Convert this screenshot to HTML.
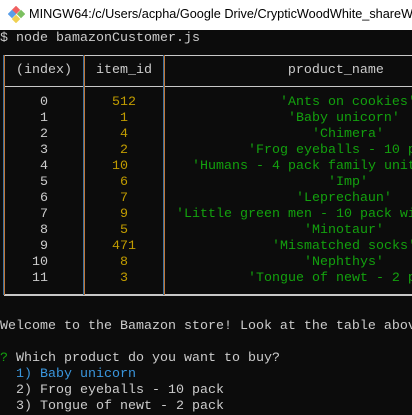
<!DOCTYPE html>
<html><head><meta charset="utf-8"><style>
html,body{margin:0;padding:0;}
body{width:412px;height:412px;overflow:hidden;background:#0c0c0c;position:relative;font-family:"Liberation Mono",monospace;}
#title{position:absolute;left:0;top:0;width:412px;height:30px;background:#fff;overflow:hidden;}
#title span{position:absolute;left:29px;top:7px;font-family:"Liberation Sans",sans-serif;font-size:12.7px;color:#000;white-space:nowrap;}
.l{position:absolute;left:0;width:412px;overflow:hidden;height:16px;line-height:16px;font-size:13.33px;white-space:pre;color:#cccccc;}
.y{color:#c19c00}.g{color:#13a10e}.b{color:#3a96dd}
.h{position:absolute;height:1px;background:#c8c8c8;left:4px;width:408px;}
.v{position:absolute;width:1px;top:55px;height:240px;background:#c0783a;box-shadow:-1px 0 0 #3a6f9d;}
</style></head><body>
<div id="title">
<svg style="position:absolute;left:8px;top:6px" width="17" height="17" viewBox="0 0 17 17">
<rect x="5" y="1" width="6" height="6" transform="rotate(45 8 4)" fill="#f06060"/>
<rect x="1" y="5" width="6" height="6" transform="rotate(45 4 8)" fill="#5a9ee8"/>
<rect x="10" y="5" width="6" height="6" transform="rotate(45 13 8)" fill="#7cc060"/>
<rect x="5" y="10" width="6" height="6" transform="rotate(45 8 13)" fill="#f0d050"/>
</svg>
<span>MINGW64:/c/Users/acpha/Google Drive/CrypticWoodWhite_shareWithA</span></div>
<div class="h" style="top:55px"></div>
<div class="h" style="top:86px"></div>
<div class="h" style="top:294px;height:2px"></div>
<div class="v" style="left:4px"></div>
<div class="v" style="left:84px"></div>
<div class="v" style="left:164px"></div>
<div class="l" style="top:31px">$ node bamazonCustomer.js</div>
<div class="l" style="top:63px">  (index)   item_id                 product_name</div>
<div class="l" style="top:95px">     0        <span class="y">512</span>                  <span class="g">'Ants on cookies'</span></div>
<div class="l" style="top:111px">     1         <span class="y">1</span>                    <span class="g">'Baby unicorn'</span></div>
<div class="l" style="top:127px">     2         <span class="y">4</span>                       <span class="g">'Chimera'</span></div>
<div class="l" style="top:143px">     3         <span class="y">2</span>               <span class="g">'Frog eyeballs - 10 pack'</span></div>
<div class="l" style="top:159px">     4        <span class="y">10</span>        <span class="g">'Humans - 4 pack family unit'</span></div>
<div class="l" style="top:175px">     5         <span class="y">6</span>                         <span class="g">'Imp'</span></div>
<div class="l" style="top:191px">     6         <span class="y">7</span>                     <span class="g">'Leprechaun'</span></div>
<div class="l" style="top:207px">     7         <span class="y">9</span>      <span class="g">'Little green men - 10 pack with'</span></div>
<div class="l" style="top:223px">     8         <span class="y">5</span>                      <span class="g">'Minotaur'</span></div>
<div class="l" style="top:239px">     9        <span class="y">471</span>                 <span class="g">'Mismatched socks'</span></div>
<div class="l" style="top:255px">    10         <span class="y">8</span>                      <span class="g">'Nephthys'</span></div>
<div class="l" style="top:271px">    11         <span class="y">3</span>               <span class="g">'Tongue of newt - 2 pack'</span></div>
<div class="l" style="top:319px">Welcome to the Bamazon store! Look at the table above</div>
<div class="l" style="top:351px"><span class="g">?</span> Which product do you want to buy?</div>
<div class="l b" style="top:367px">  1) Baby unicorn</div>
<div class="l" style="top:383px">  2) Frog eyeballs - 10 pack</div>
<div class="l" style="top:399px">  3) Tongue of newt - 2 pack</div>
</body></html>
